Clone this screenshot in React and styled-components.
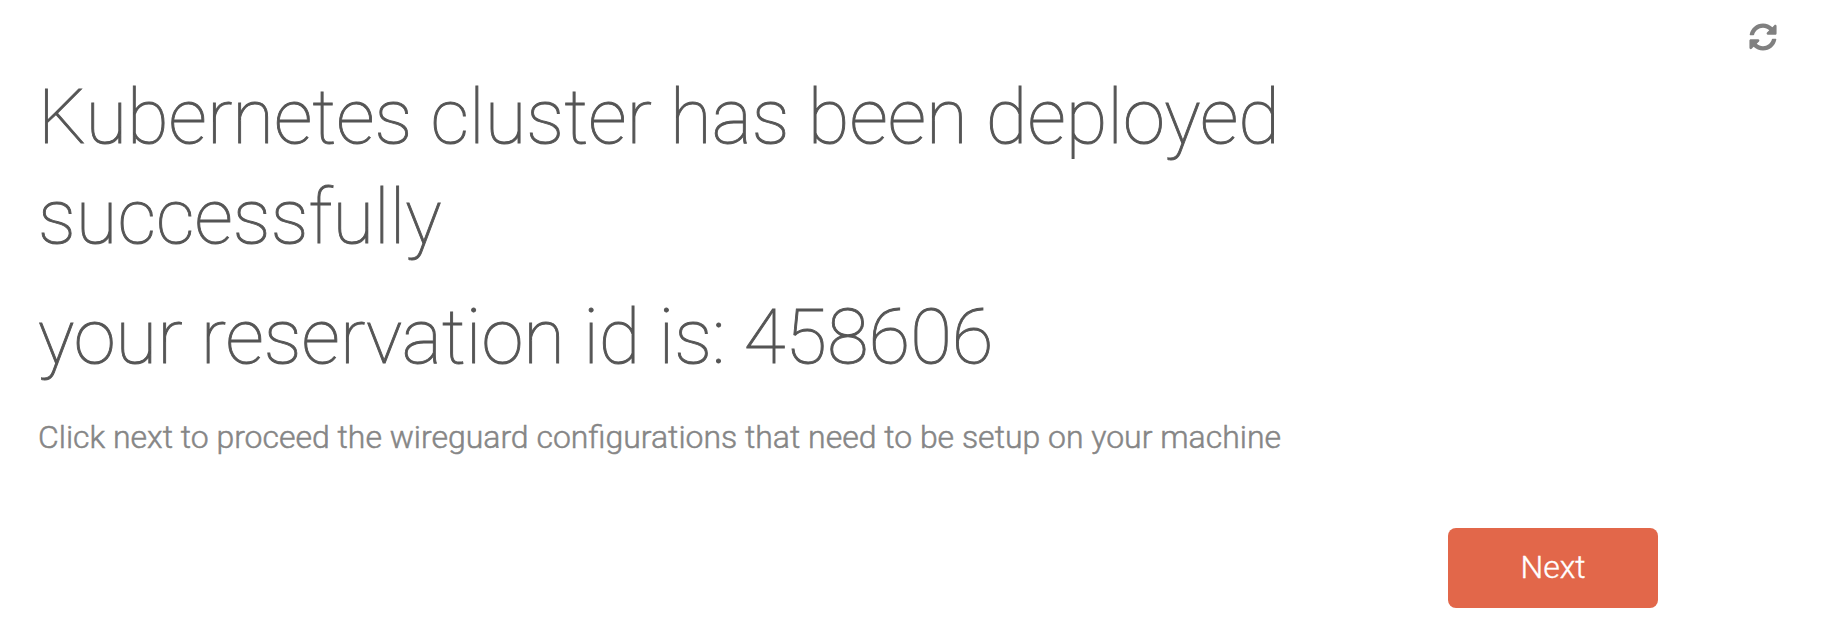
import React from 'react';
import styled, { createGlobalStyle } from 'styled-components';
import { FaSyncAlt } from 'react-icons/fa';

const GlobalStyle = createGlobalStyle`
  * { box-sizing: border-box; }
  body { margin: 0; background: #fff; font-family: Roboto, "Liberation Sans", sans-serif; overflow: hidden; }
`;
const Page = styled.main`
  display: flex;
  align-items: flex-start;
  justify-content: space-between;
  height: 626px;
  padding: 0 67px 0 38px;
`;
const Panel = styled.section`
  width: 1620px;
  padding-top: 67px;
  display: flex;
  flex-direction: column;
`;
const Heading = styled.h1`
  margin: 0 0 20px;
  width: 1300px;
  font-size: 76px;
  line-height: 100px;
  font-weight: 100;
  -webkit-text-stroke: 0.9px #555;
  color: #555;
`;
const Hint = styled.p`
  margin: 0;
  padding-top: 6px;
  font-size: 31.96px;
  line-height: 48px;
  font-weight: 300;
  -webkit-text-stroke: 0.5px #868686;
  color: #868686;
`;
const NextButton = styled.button`
  align-self: flex-end;
  width: 210px;
  height: 80px;
  margin-top: 67px;
  padding: 0 0 2px;
  border: 0;
  border-radius: 8px;
  background: #e2674a;
  color: #fff;
  -webkit-text-stroke: 0.4px #fff;
  font: 300 32px Roboto, "Liberation Sans", sans-serif;
`;
const Refresh = styled.button`
  display: flex;
  margin-top: 22.5px;
  padding: 0;
  border: 0;
  background: none;
  color: #808080;
`;

export default function App() {
  return (
    <Page>
      <GlobalStyle />
      <Panel>
        <Heading>Kubernetes cluster has been deployed successfully</Heading>
        <Heading>your reservation id is: 458606</Heading>
        <Hint>Click next to proceed the wireguard configurations that need to be setup on your machine</Hint>
        <NextButton>Next</NextButton>
      </Panel>
      <Refresh aria-label="Refresh"><FaSyncAlt size={28} /></Refresh>
    </Page>
  );
}
